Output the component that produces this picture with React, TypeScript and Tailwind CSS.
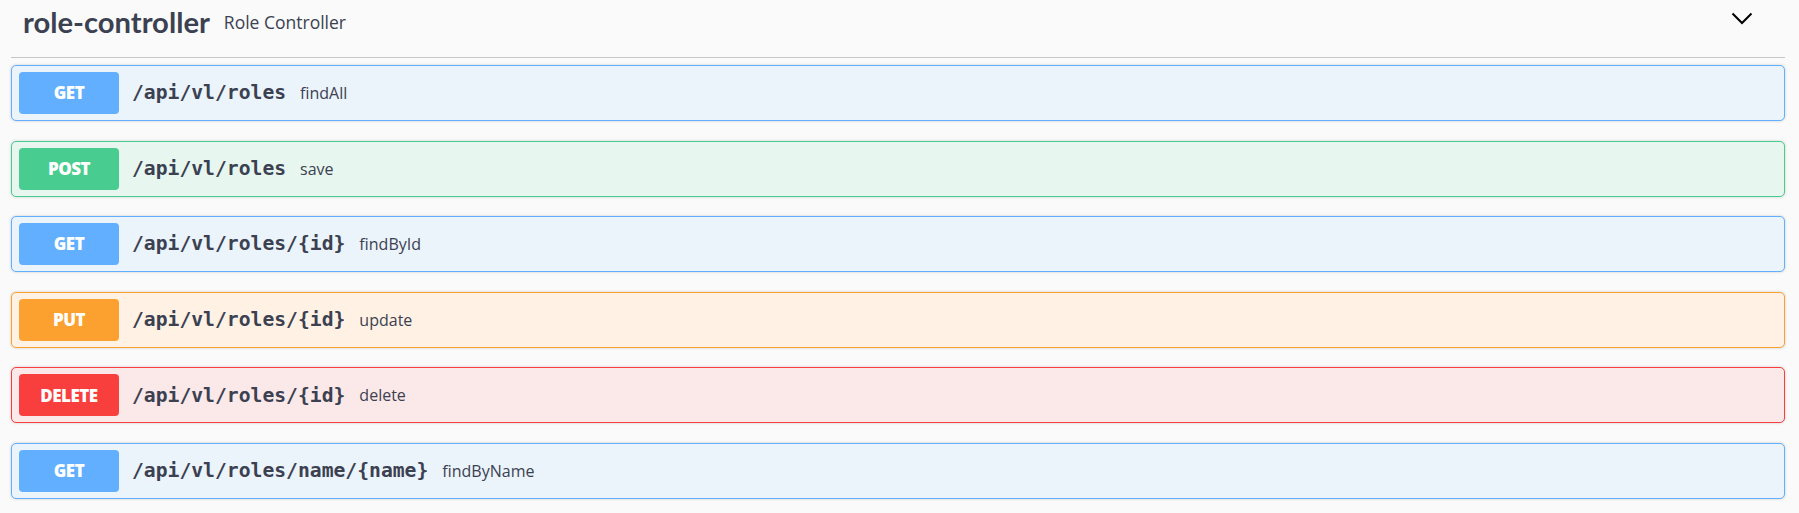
const ops = [
  { method: "GET", path: "/api/vl/roles", desc: "findAll", box: "border-[#61affe] bg-[#ebf3fb]", badge: "bg-[#61affe]" },
  { method: "POST", path: "/api/vl/roles", desc: "save", box: "border-[#49cc90] bg-[#e8f6f0]", badge: "bg-[#49cc90]" },
  { method: "GET", path: "/api/vl/roles/{id}", desc: "findById", box: "border-[#61affe] bg-[#ebf3fb]", badge: "bg-[#61affe]" },
  { method: "PUT", path: "/api/vl/roles/{id}", desc: "update", box: "border-[#fca130] bg-[#fff1e4]", badge: "bg-[#fca130]" },
  { method: "DELETE", path: "/api/vl/roles/{id}", desc: "delete", box: "border-[#f93e3e] bg-[#fbe8e8]", badge: "bg-[#f93e3e]" },
  { method: "GET", path: "/api/vl/roles/name/{name}", desc: "findByName", box: "border-[#61affe] bg-[#ebf3fb]", badge: "bg-[#61affe]" },
];

function Chevron() {
  return (
    <svg width="22" height="13" viewBox="0 0 22 13" className="text-black">
      <polyline points="1.5,1.5 11,11 20.5,1.5" fill="none" stroke="currentColor" strokeWidth="2" />
    </svg>
  );
}

function OpRow({ op }: { op: (typeof ops)[number] }) {
  return (
    <div className={`flex h-[56px] items-center rounded-[5px] border pl-[7px] shadow-[0_0_3px_rgba(0,0,0,0.19)] ${op.box}`}>
      <span
        className={`flex h-[42px] w-[100px] shrink-0 items-center justify-center rounded-[4px] text-[17px] font-extrabold tracking-[-0.5px] text-white ${op.badge}`}
        style={{ fontFamily: '"Open Sans", sans-serif' }}
      >
        {op.method}
      </span>
      <span className="ml-[13px] text-[19.7px] font-bold text-[#3b4151]" style={{ fontFamily: '"DejaVu Sans Mono", monospace' }}>
        {op.path}
      </span>
      <span className="ml-[14px] text-[16px] text-[#3b4151]" style={{ fontFamily: '"Open Sans", sans-serif' }}>
        {op.desc}
      </span>
    </div>
  );
}

export default function App() {
  return (
    <div className="min-h-screen bg-[#fafafa] pl-[11px] pr-[14px]">
      <div className="flex h-[58px] border-b border-[#c6c7cb]">
        <div className="flex items-start pl-[12px] pt-[6.8px]">
          <h3 className="text-[29.2px] font-bold leading-none text-[#3b4151]" style={{ fontFamily: 'Lato, sans-serif' }}>
            role-controller
          </h3>
          <small className="ml-[14px] mt-[7px] text-[17.5px] leading-none text-[#3b4151]" style={{ fontFamily: '"Open Sans", sans-serif' }}>
            Role Controller
          </small>
        </div>
        <div className="ml-auto mr-[32px] mt-[12px]">
          <Chevron />
        </div>
      </div>
      <div className="mt-[7px] flex flex-col gap-[19.6px]">
        {ops.map((op, i) => (
          <OpRow key={i} op={op} />
        ))}
      </div>
    </div>
  );
}
